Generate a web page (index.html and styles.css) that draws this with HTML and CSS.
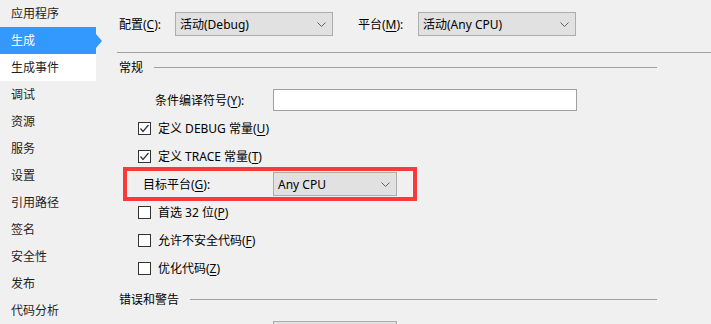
FILE: index.html
```html
<!DOCTYPE html>
<html lang="zh-CN">
<head>
  <meta charset="UTF-8" />
  <title>项目属性 - 生成</title>
  <link rel="stylesheet" href="styles.css">
</head>
<body>
  <div class="sidebar">
    <div class="nav-item">应用程序</div>
    <div class="nav-item active">生成</div>
    <div class="nav-item hover">生成事件</div>
    <div class="nav-item">调试</div>
    <div class="nav-item">资源</div>
    <div class="nav-item">服务</div>
    <div class="nav-item">设置</div>
    <div class="nav-item">引用路径</div>
    <div class="nav-item">签名</div>
    <div class="nav-item">安全性</div>
    <div class="nav-item">发布</div>
    <div class="nav-item">代码分析</div>
  </div>

  <div class="main">
    <div class="toprow">
      <span class="top-label">配置(<u>C</u>):</span>
      <div class="select wide">活动(Debug)<svg class="chev" width="9" height="6" viewBox="0 0 9 6"><polyline points="0.5,0.5 4.5,4.5 8.5,0.5" /></svg></div>
      <span class="top-label second">平台(<u>M</u>):</span>
      <div class="select wide">活动(Any CPU)<svg class="chev" width="9" height="6" viewBox="0 0 9 6"><polyline points="0.5,0.5 4.5,4.5 8.5,0.5" /></svg></div>
    </div>
    <div class="rule"></div>

    <div class="group-head">常规<span class="group-line"></span></div>

    <div class="row cond">
      <span class="field-label">条件编译符号(<u>Y</u>):</span>
      <div class="textbox"></div>
    </div>
    <div class="row check">
      <span class="box"><svg width="11" height="11" viewBox="0 0 11 11"><polyline points="1.5,5.5 4,8.5 9.5,2" /></svg></span>
      <span>定义 DEBUG 常量(<u>U</u>)</span>
    </div>
    <div class="row check">
      <span class="box"><svg width="11" height="11" viewBox="0 0 11 11"><polyline points="1.5,5.5 4,8.5 9.5,2" /></svg></span>
      <span>定义 TRACE 常量(<u>T</u>)</span>
    </div>
    <div class="row target">
      <span class="field-label">目标平台(<u>G</u>):</span>
      <div class="select narrow">Any CPU<svg class="chev" width="9" height="6" viewBox="0 0 9 6"><polyline points="0.5,0.5 4.5,4.5 8.5,0.5" /></svg></div>
    </div>
    <div class="row check">
      <span class="box"></span>
      <span>首选 32 位(<u>P</u>)</span>
    </div>
    <div class="row check">
      <span class="box"></span>
      <span>允许不安全代码(<u>F</u>)</span>
    </div>
    <div class="row check">
      <span class="box"></span>
      <span>优化代码(<u>Z</u>)</span>
    </div>

    <div class="group-head second-group">错误和警告<span class="group-line"></span></div>

    <div class="row bottom">
      <div class="select narrow stub"></div>
    </div>
  </div>
</body>
</html>
```

FILE: styles.css
```css
html, body {
  overflow: hidden;
}
body {
  margin: 0;
  background: #f0f0f0;
  font-family: "Noto Sans", "Noto Sans CJK SC", sans-serif;
  font-size: 12px;
  color: #000;
  display: flex;
  height: 324px;
}
u {
  text-decoration: underline;
  text-underline-offset: 2px;
}
.sidebar {
  width: 96px;
  flex-shrink: 0;
}
.nav-item {
  height: 27px;
  line-height: 27px;
  padding-left: 11px;
  color: #1e1e1e;
  position: relative;
}
.nav-item.active {
  background: #3399ff;
  color: #fff;
}
.nav-item.active::after {
  content: "";
  position: absolute;
  right: -6px;
  top: 7px;
  border-left: 6px solid #3399ff;
  border-top: 7px solid transparent;
  border-bottom: 7px solid transparent;
}
.nav-item.hover {
  background: #fff;
}
.main {
  margin-left: 21px;
  padding-top: 12px;
  flex: 1;
  overflow: hidden;
}
.toprow {
  display: flex;
  align-items: center;
  height: 24px;
}
.top-label {
  width: 58px;
  padding-left: 2px;
  box-sizing: border-box;
}
.top-label.second {
  margin-left: 23px;
  width: 62px;
}
.select {
  height: 24px;
  box-sizing: border-box;
  background: #e1e1e1;
  border: 1px solid #adadad;
  display: flex;
  align-items: center;
  padding-left: 4px;
  position: relative;
}
.select.wide {
  width: 158px;
}
.select.narrow {
  width: 124px;
}
.select.stub {
  height: 3px;
  border-bottom: none;
}
.chev {
  position: absolute;
  right: 6px;
  top: 9px;
}
.chev polyline {
  fill: none;
  stroke: #606060;
  stroke-width: 1;
}
.rule {
  margin-top: 16px;
  height: 1px;
  background: #a0a0a0;
}
.group-head {
  height: 28px;
  display: flex;
  align-items: center;
  padding-left: 2px;
  width: 540px;
  box-sizing: border-box;
}
.group-line {
  flex: 1;
  height: 1px;
  background: #a0a0a0;
  margin-left: 11px;
}
.second-group {
  margin-top: 3px;
}
.row {
  height: 28px;
  display: flex;
  align-items: center;
}
.row.cond {
  margin-top: 5px;
}
.field-label {
  width: 118px;
  padding-left: 38px;
  flex-shrink: 0;
}
.textbox {
  width: 304px;
  height: 22px;
  box-sizing: border-box;
  background: #fff;
  border: 1px solid #a0a0a0;
}
.row.check {
  padding-left: 21px;
  gap: 7px;
}
.box {
  width: 13px;
  height: 13px;
  box-sizing: border-box;
  border: 1px solid #333;
  background: #fff;
  display: flex;
  align-items: center;
  justify-content: center;
}
.box polyline {
  fill: none;
  stroke: #333;
  stroke-width: 1.2;
}
.row.target {
  position: relative;
}
.row.target .field-label {
  width: 156px;
  padding-left: 26px;
  box-sizing: border-box;
}
.row.target::before {
  content: "";
  position: absolute;
  left: 6px;
  top: -3px;
  width: 294px;
  height: 34px;
  box-sizing: border-box;
  border: 4px solid #f83a3a;
}
.row.bottom {
  height: auto;
  margin-top: 8px;
  padding-left: 156px;
}
```
